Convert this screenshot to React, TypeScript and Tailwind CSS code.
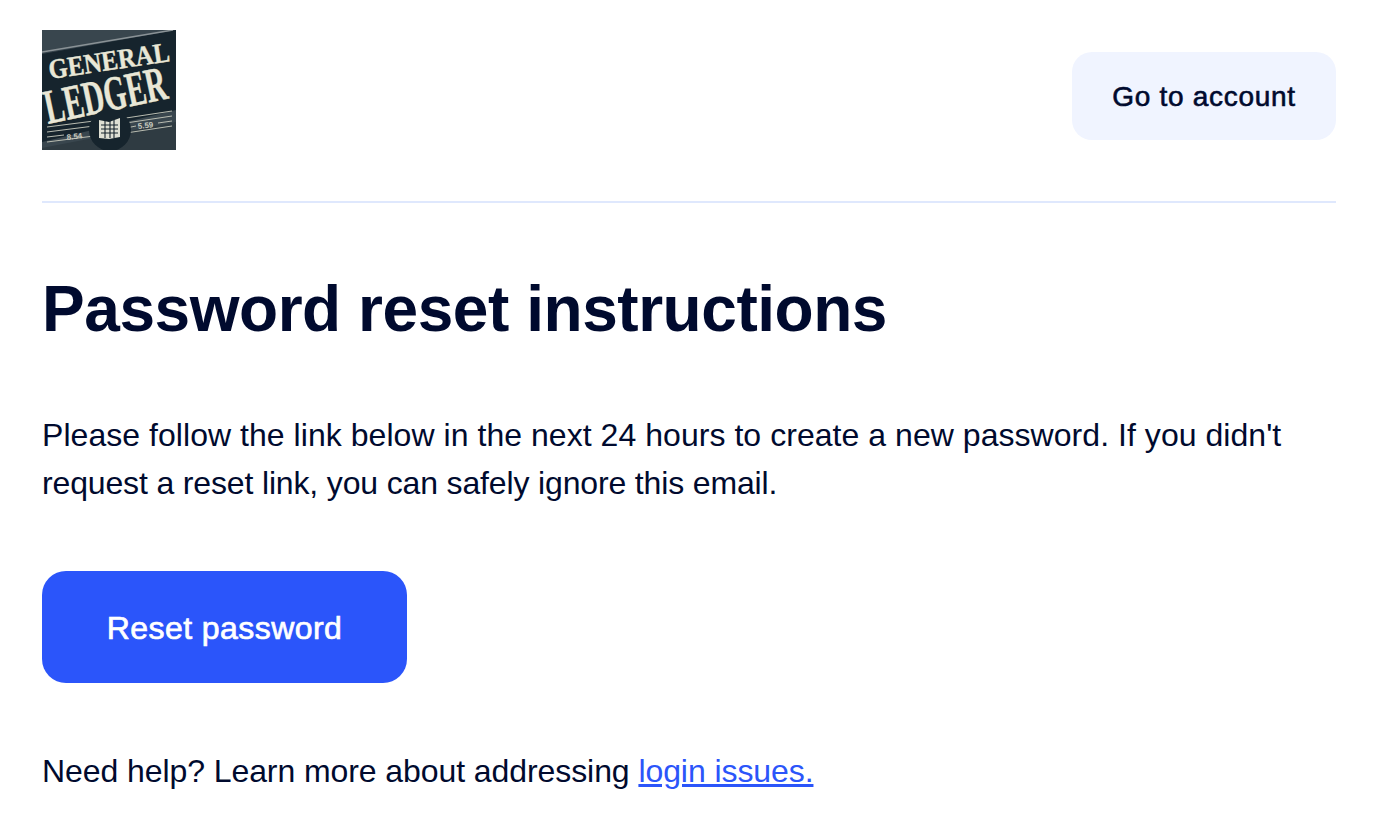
export default function App() {
  return (
    <div className="min-h-[828px] bg-white pl-[42px] pr-[46px] pt-[30px] text-[#000a2e] font-['Liberation_Sans',Arial,sans-serif]">
      <header className="flex items-start justify-between border-b-2 border-[#dfe8fd] pb-[51px]">
        <svg width="134" height="120" viewBox="0 0 134 120" className="block" role="img" aria-label="General Ledger logo">
          <rect width="134" height="120" fill="#39464e" />
          <path d="M0 24 L134 0 V80 L0 112 Z" fill="#16242d" />
          <path d="M0 22 L131 0" stroke="#8a9296" strokeWidth="1.5" />
          <path d="M0 118 L134 92 V120 H0 Z" fill="#2f3b42" />
          <g fill="#e9e7d6" stroke="#e9e7d6" strokeWidth="0.4" fontFamily="'Liberation Serif',serif" fontWeight="700">
            <text x="8" y="49" fontSize="28" transform="rotate(-8.5 8 49)" textLength="122" lengthAdjust="spacingAndGlyphs">GENERAL</text>
            <text x="6" y="94" fontSize="49" transform="rotate(-12 6 94)" textLength="124" lengthAdjust="spacingAndGlyphs">LEDGER</text>
          </g>
          <g stroke="#b8bbb0" strokeWidth="1" fill="none">
            <path d="M5 97 L52 91 M5 102 L52 96 M5 107 L22 105 M48 102 L52 101 M5 112 L52 106 M84 88 L130 81 M84 93 L130 86 M84 98 L94 96 M116 93 L130 91 M84 103 L130 96" />
          </g>
          <circle cx="68" cy="100" r="21" fill="#16242d" />
          <path d="M57 90 L67 92 L78 88 V107 L67 109 L57 108 Z" fill="#dfe0d4" />
          <path d="M59 95 H76 M59 99 H76 M59 103 H76 M63 91 V108 M68 91 V108 M72 90 V108" stroke="#16242d" strokeWidth="1.1" />
          <g fill="#c9cbc0" fontFamily="'Liberation Sans',sans-serif" fontSize="8" fontWeight="700">
            <text x="25" y="110" transform="rotate(-6 25 110)">8.54</text>
            <text x="96" y="99" transform="rotate(-6 96 99)">5.59</text>
          </g>
        </svg>
        <a href="#" className="mt-[22px] flex h-[88px] w-[264px] items-center justify-center rounded-[20px] bg-[#f0f4ff] pt-[2px] text-[28px] tracking-[0.7px] [-webkit-text-stroke:0.6px_#000a2e]">Go to account</a>
      </header>
      <h1 className="mt-[66px] text-[64px] font-bold leading-[80px] tracking-[-0.45px]">Password reset instructions</h1>
      <p className="mt-[62px] text-[32px] leading-[48px] tracking-[0.045px]">Please follow the link below in the next 24 hours to create a new password. If you didn't <span className="tracking-[-0.15px]">request a reset link, you can safely ignore this email.</span></p>
      <a href="#" className="mt-[64px] flex h-[112px] w-[365px] items-center justify-center rounded-[24px] bg-[#2b55fa] pt-[2px] text-[32px] tracking-[0.45px] text-white [-webkit-text-stroke:0.7px_#ffffff]">Reset password</a>
      <p className="mt-[64px] text-[32px] leading-[48px] tracking-[-0.08px]">Need help? Learn more about addressing <a href="#" className="text-[#2b55fa] underline">login issues.</a></p>
    </div>
  );
}
